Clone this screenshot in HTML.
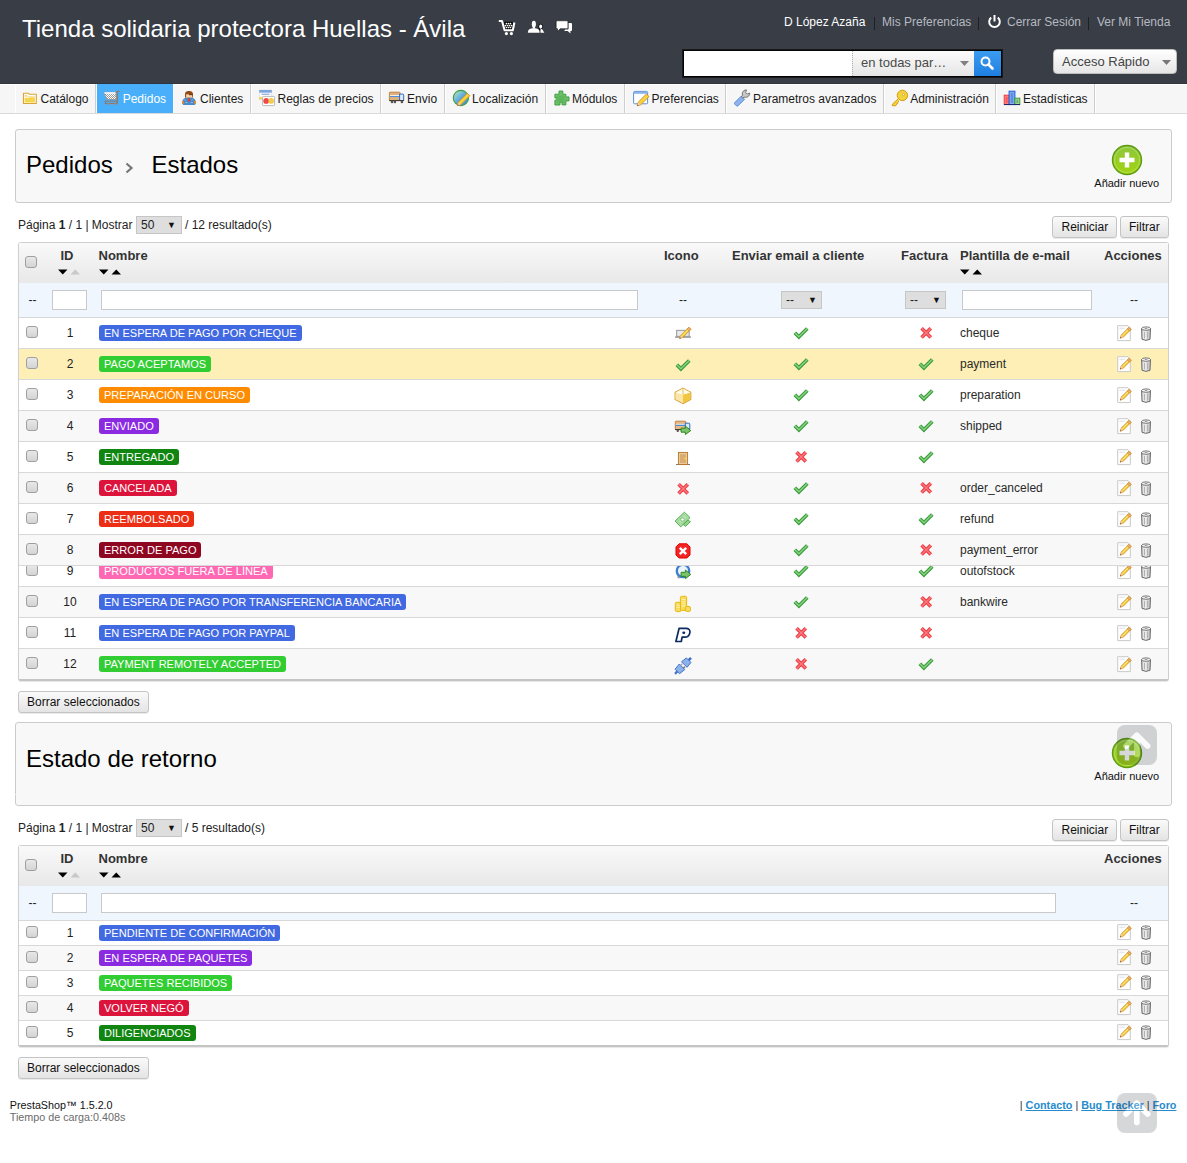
<!DOCTYPE html><html><head><meta charset="utf-8"><style>*{margin:0;padding:0;box-sizing:border-box}
html,body{width:1187px;height:1163px;overflow:hidden;background:#fff;font-family:"Liberation Sans",sans-serif;color:#222}
.a{position:absolute;white-space:nowrap}
.ico{position:absolute;overflow:visible}
#hdr{position:absolute;left:0;top:0;width:1187px;height:84px;background:#383d46}
#menu{position:absolute;left:0;top:84px;width:1187px;height:30px;background:#f6f6f6;border-top:1px solid #fff;border-bottom:1px solid #dadada}
</style></head><body><div id="hdr"></div><div class="a" style="left:22px;top:16.68px;font-size:24px;line-height:24px;color:#fff;">Tienda solidaria protectora Huellas - Ávila</div><svg class="ico" style="left:494px;top:14px" width="30" height="26" viewBox="0 0 30 26">
<rect x="10.3" y="7.8" width="8.4" height="7.4" fill="#000"/>
<path d="M4.8 7h3.2l2.6 9.3h8.2l1.6-7.8" fill="none" stroke="#fff" stroke-width="2.1" stroke-linejoin="round"/>
<g fill="#fff"><circle cx="12.4" cy="9.6" r=".85"/><circle cx="14.5" cy="9.6" r=".85"/><circle cx="16.5" cy="9.6" r=".85"/><circle cx="11.4" cy="11.6" r=".85"/><circle cx="13.5" cy="11.6" r=".85"/><circle cx="15.5" cy="11.6" r=".85"/><circle cx="17.5" cy="11.6" r=".85"/><circle cx="12.4" cy="13.5" r=".85"/><circle cx="14.5" cy="13.5" r=".85"/><circle cx="16.5" cy="13.5" r=".85"/>
<circle cx="12.4" cy="19.6" r="1.6"/><circle cx="17.4" cy="19.6" r="1.6"/></g></svg><svg class="ico" style="left:522px;top:14px" width="30" height="26" viewBox="0 0 30 26">
<path d="M16.5 14.5l1.5.2.8 4.1h-1.8z" fill="#111"/><ellipse cx="18.7" cy="12.6" rx="2.2" ry="2.8" fill="#111"/>
<g fill="#fff"><ellipse cx="11.85" cy="10.2" rx="2.05" ry="3.4"/><rect x="10.8" y="12" width="2.1" height="2.6"/><path d="M5.9 18.8c0-3.3 1.6-4.3 4.6-4.6h2.6c3 .3 4.6 1.3 4.6 4.6z"/>
<ellipse cx="18.7" cy="12.6" rx="1.5" ry="2.1"/><path d="M18.3 18.8l.3-3.6c.8-.4 1.3-.2 1.8.4l1.9 3.2z"/></g></svg><svg class="ico" style="left:522px;top:14px" width="60" height="26" viewBox="0 0 60 26">
<path d="M35.2 6.8h9.7a1 1 0 0 1 1 1v5.9a1 1 0 0 1-1 1h-6.8l-2.6 2.8v-2.8h-.3a1 1 0 0 1-1-1V7.8a1 1 0 0 1 1-1z" fill="#fff" stroke="#000" stroke-width=".5"/>
<path d="M46.6 9h2.4a1 1 0 0 1 1 1v5.9a1 1 0 0 1-1 1h-.6v2.7l-2.6-2.7h-3.8l1.4-1.4h2.2a1 1 0 0 0 1-1z" fill="#fff"/></svg><div class="a" style="left:784px;top:15.84px;font-size:12px;line-height:12px;color:#fff;">D López Azaña</div><div class="a" style="left:874px;top:17px;width:1px;height:13px;background:#1c1f24"></div><div class="a" style="left:882px;top:15.84px;font-size:12px;line-height:12px;color:#b6bac0;">Mis Preferencias</div><div class="a" style="left:978px;top:17px;width:1px;height:13px;background:#1c1f24"></div><svg class="ico" style="left:987px;top:14px" width="15" height="15" viewBox="0 0 15 15">
<path d="M4.2 3.6A5.3 5.3 0 1 0 10.8 3.6" fill="none" stroke="#fff" stroke-width="2"/><rect x="6.5" y="1" width="2" height="6.5" fill="#fff"/></svg><div class="a" style="left:1007px;top:15.84px;font-size:12px;line-height:12px;color:#b6bac0;">Cerrar Sesión</div><div class="a" style="left:1088px;top:17px;width:1px;height:13px;background:#1c1f24"></div><div class="a" style="left:1097px;top:15.84px;font-size:12px;line-height:12px;color:#b6bac0;">Ver Mi Tienda</div><div class="a" style="left:682px;top:49px;width:321px;height:29px;background:#050505;border:1px solid #1a1a1a"></div><div class="a" style="left:684px;top:51px;width:168px;height:25px;background:#fff"></div><div class="a" style="left:852px;top:51px;width:122px;height:25px;background:linear-gradient(#fbfbfb,#e6e6e6);border-left:1px dotted #aaa"></div><div class="a" style="left:861px;top:56.20px;font-size:13px;line-height:13px;color:#4a4a4a;">en todas par…</div><svg class="ico" style="left:960px;top:61px" width="9" height="5"><path d="M0 0h9L4.5 5z" fill="#808080"/></svg><div class="a" style="left:974px;top:51px;width:27px;height:25px;background:linear-gradient(#3c9cf0,#1f7fe0)"></div><svg class="ico" style="left:979px;top:55px" width="16" height="16" viewBox="0 0 16 16">
<circle cx="6.5" cy="6.5" r="4" fill="none" stroke="#fff" stroke-width="2"/><path d="M9.5 9.5l4 4" stroke="#fff" stroke-width="2.6" stroke-linecap="round"/></svg><div class="a" style="left:1053px;top:49px;width:124px;height:25px;border-radius:4px;background:linear-gradient(#ffffff,#e6e6e6);border:1px solid #bdbdbd"></div><div class="a" style="left:1062px;top:55.00px;font-size:13px;line-height:13px;color:#444;">Acceso Rápido</div><svg class="ico" style="left:1162px;top:60px" width="9" height="5"><path d="M0 0h9L4.5 5z" fill="#777"/></svg><div id="menu"></div><div class="a" style="left:97px;top:84px;width:76px;height:29px;background:#4aaffa"></div><div class="a" style="left:95px;top:84px;width:1px;height:29px;background:#cdcdcd"></div><div class="a" style="left:250px;top:84px;width:1px;height:29px;background:#cdcdcd"></div><div class="a" style="left:380px;top:84px;width:1px;height:29px;background:#cdcdcd"></div><div class="a" style="left:444px;top:84px;width:1px;height:29px;background:#cdcdcd"></div><div class="a" style="left:545px;top:84px;width:1px;height:29px;background:#cdcdcd"></div><div class="a" style="left:624px;top:84px;width:1px;height:29px;background:#cdcdcd"></div><div class="a" style="left:725px;top:84px;width:1px;height:29px;background:#cdcdcd"></div><div class="a" style="left:883px;top:84px;width:1px;height:29px;background:#cdcdcd"></div><div class="a" style="left:995px;top:84px;width:1px;height:29px;background:#cdcdcd"></div><div class="a" style="left:1094px;top:84px;width:1px;height:29px;background:#cdcdcd"></div><div class="a" style="left:15px;top:84px;width:1px;height:29px;background:#fff"></div><div class="a" style="left:96px;top:84px;width:1px;height:29px;background:#fff"></div><div class="a" style="left:173px;top:84px;width:1px;height:29px;background:#fff"></div><div class="a" style="left:251px;top:84px;width:1px;height:29px;background:#fff"></div><div class="a" style="left:381px;top:84px;width:1px;height:29px;background:#fff"></div><div class="a" style="left:445px;top:84px;width:1px;height:29px;background:#fff"></div><div class="a" style="left:546px;top:84px;width:1px;height:29px;background:#fff"></div><div class="a" style="left:625px;top:84px;width:1px;height:29px;background:#fff"></div><div class="a" style="left:726px;top:84px;width:1px;height:29px;background:#fff"></div><div class="a" style="left:884px;top:84px;width:1px;height:29px;background:#fff"></div><div class="a" style="left:996px;top:84px;width:1px;height:29px;background:#fff"></div><div class="a" style="left:1095px;top:84px;width:1px;height:29px;background:#fff"></div><svg class="ico" style="left:20px;top:86px" width="24" height="24" viewBox="0 0 24 24"><path d="M3.5 7.3h5l.8 1h7v9.2H3.5z" fill="#fff" stroke="#e0a232" stroke-width="1.1" stroke-linejoin="round"/>
<path d="M4.6 9.3h2.2l.6.6h7.6v.6H4.6z" fill="#efc75a"/><path d="M4.6 11.8h4l.6-.5h5.7v5.1H4.6z" fill="#f5d54a"/></svg><svg class="ico" style="left:101px;top:86px" width="24" height="24" viewBox="0 0 24 24"><defs><pattern id="mesh" width="2" height="2" patternUnits="userSpaceOnUse"><rect width="2" height="2" fill="#fff"/><rect width="1" height="1" fill="#9a9a9a"/><rect x="1" y="1" width="1" height="1" fill="#9a9a9a"/></pattern></defs>
<path d="M3.3 6.2L14.6 6.5 15.6 13.5 6.3 13.6 5 11.5 4.2 9.5z" fill="url(#mesh)" stroke="#8a8580" stroke-width=".6"/>
<path d="M3.3 6.3h11.3v1.4H3.6z" fill="#fff"/>
<path d="M14.8 6.6l1.6-1.2h2.2M16.6 6.5l-.4 10.8" fill="none" stroke="#8a7a70" stroke-width="1.3"/>
<rect x="4.3" y="15.1" width="12" height="2.3" fill="none" stroke="#8a7a70" stroke-width="1.1"/>
<circle cx="7.4" cy="18" r="1.2" fill="#9a8a80"/><circle cx="14.4" cy="18" r="1.2" fill="#9a8a80"/></svg><svg class="ico" style="left:179px;top:86px" width="24" height="24" viewBox="0 0 24 24"><path d="M3.1 17.6c0-4.2 2.3-6.5 6.9-6.5s6.9 2.3 6.9 6.5l-1.2 1.4H4.3z" fill="#4a8acb"/>
<path d="M5.5 13.5l1.2 1.3M13.5 13.3l-.8 1.5M6.2 16.5h2.5M11.5 16.5h2.5" stroke="#9cc4ee" stroke-width=".7"/>
<path d="M9 12.2h1.9l.3 2.5-1.2 1.2-1.2-1.2z" fill="#d8403a"/>
<rect x="3" y="14.8" width="1.9" height="3.2" rx=".9" fill="#e48a2a"/><rect x="15.1" y="14.8" width="1.9" height="3.2" rx=".9" fill="#e48a2a"/>
<path d="M6 8.8c0-3.2 1.5-3.9 4-3.9s4 .7 4 3.9v2.6H6z" fill="#8f4a18"/>
<path d="M7.1 8.3h6.1v3.3H7.1z" fill="#f7d2a6"/><path d="M10 8h4v1.2h-4z" fill="#7a3a10"/></svg><svg class="ico" style="left:256px;top:86px" width="24" height="24" viewBox="0 0 24 24"><rect x="3.2" y="4" width="12.6" height="9.6" fill="#fff" stroke="#c9d2e0" stroke-width=".5"/>
<rect x="3.2" y="4" width="12.6" height="2.7" fill="#7ea6dc"/><path d="M5.5 8.3h8" stroke="#9db6dc" stroke-width="1.4"/>
<rect x="3.2" y="10.8" width="3.2" height="2.8" fill="#f5d35a"/>
<rect x="6.6" y="10.4" width="12" height="9.2" rx=".8" fill="#fff" stroke="#a8a8a8" stroke-width=".8"/>
<circle cx="10.2" cy="14.9" r="2.9" fill="#f04848"/><circle cx="15.2" cy="14.9" r="2.8" fill="#f2cc50"/></svg><svg class="ico" style="left:386px;top:86px" width="24" height="24" viewBox="0 0 24 24"><rect x="3.4" y="6.2" width="10.6" height="8.3" rx=".6" fill="#e0b07a" stroke="#c07a3a" stroke-width=".9"/>
<rect x="4" y="9.2" width="9.6" height=".8" fill="#fff"/><rect x="4" y="10" width="9.6" height="1" fill="#4a90e0"/>
<path d="M13.6 8.1h3.1a1 1 0 0 1 1 1v5.4h-4.1z" fill="#dce9f8" stroke="#2d6cc0" stroke-width="1"/>
<rect x="3.2" y="14.1" width="14.6" height="1" fill="#3a3028"/>
<circle cx="6" cy="15.9" r="1.3" fill="#555"/><circle cx="8.9" cy="15.9" r="1.3" fill="#555"/><circle cx="15.9" cy="15.9" r="1.3" fill="#555"/></svg><svg class="ico" style="left:450px;top:86px" width="24" height="24" viewBox="0 0 24 24"><defs><linearGradient id="gl" x1="0" y1="0" x2="1" y2="1"><stop offset="0" stop-color="#c8f0c0"/><stop offset=".5" stop-color="#5aa8e0"/><stop offset="1" stop-color="#3a8ad0"/></linearGradient></defs>
<circle cx="10.9" cy="12" r="7.6" fill="url(#gl)" stroke="#3fa040" stroke-width="1.1"/>
<path d="M7.4 19.6l.9-3.4 9-9 2.5 2.5-9 9z" fill="#f5d53a" stroke="#d08a2a" stroke-width=".9"/><path d="M7.4 19.6l.9-3.4 2.5 2.5z" fill="#f4c8a0"/><path d="M7.4 19.6l.4-1.3 1 1z" fill="#5a3a10"/></svg><svg class="ico" style="left:551px;top:86px" width="24" height="24" viewBox="0 0 24 24"><path d="M8 5h3.8v3.2h3.1v2.7H18v4h-3.1v4h-3.8v-2.5H9V19H3.9v-4.8h1.9V12H3.9V8.2H8z" fill="#6cc06a" stroke="#3d9a3d" stroke-width=".9" stroke-linejoin="round"/>
<path d="M6.2 9.6h7.2v7.6H6.2z" fill="#5ab458" opacity=".7"/></svg><svg class="ico" style="left:630px;top:86px" width="24" height="24" viewBox="0 0 24 24"><rect x="3.6" y="5.4" width="14" height="12.4" rx="1" fill="#fff" stroke="#5b8fd6" stroke-width="1"/>
<rect x="4" y="5.8" width="13.2" height="2" fill="#8ab4ea"/>
<path d="M7.2 19.8l1-3.6 8.2-8.2 2.6 2.6-8.2 8.2z" fill="#f5d53a" stroke="#d08a2a" stroke-width=".9"/><path d="M7.2 19.8l1-3.6 2.6 2.6z" fill="#f4c8a0"/><path d="M7.2 19.8l.4-1.4 1 1z" fill="#5a3a10"/></svg><svg class="ico" style="left:731px;top:86px" width="24" height="24" viewBox="0 0 24 24"><path d="M3.8 16.6l6.6-6.6 3.2 3.2-6.6 6.6a1.2 1.2 0 0 1-1.6 0l-1.6-1.6a1.2 1.2 0 0 1 0-1.6z" fill="#8fb2ea" stroke="#4f86dc" stroke-width=".9"/>
<path d="M10.4 10.8l1.1-1.1c-.6-2.2-.1-4.6 2.4-5.6l1.6-.2-.9 2.5 1.6 1.6 2.5-.9-.2 1.6c-1 2.5-3.4 3-5.6 2.4l-1.1 1.1z" fill="#c8c8c8" stroke="#6a6a6a" stroke-width=".9"/></svg><svg class="ico" style="left:889px;top:86px" width="24" height="24" viewBox="0 0 24 24"><circle cx="13.4" cy="9.4" r="5.2" fill="#f2d23a" stroke="#d49a10" stroke-width="1"/>
<circle cx="14.5" cy="8.5" r="1.1" fill="#fff" stroke="#d49a10" stroke-width=".7"/>
<path d="M9.5 12.6L3.4 18.2v1.5h3.3l.9-.9v-1l1-.3.1-1 1.3-1.2" fill="#f2d23a" stroke="#d49a10" stroke-width="1" stroke-linejoin="round"/></svg><svg class="ico" style="left:1001px;top:86px" width="24" height="24" viewBox="0 0 24 24"><rect x="3.2" y="9.2" width="4.9" height="9.4" fill="#ff8a8a" stroke="#f03a3a" stroke-width="1"/><rect x="4.6" y="10.6" width="2" height="6.6" fill="#ff5555"/>
<rect x="8.1" y="5.2" width="5.8" height="13.4" fill="#8ab4f0" stroke="#1a5ad8" stroke-width="1"/><rect x="9.6" y="6.6" width="2.8" height="10.6" fill="#5a90e0"/>
<rect x="13.9" y="12.2" width="4.9" height="6.4" fill="#a8dca0" stroke="#3a9a3a" stroke-width="1"/><rect x="15.3" y="13.6" width="2" height="3.6" fill="#6ab06a"/>
<rect x="3" y="18" width="16" height="1" fill="#1a2a70"/></svg><div class="a" style="left:40.5px;top:92.84px;font-size:12px;line-height:12px;color:#1a1a1a;">Catálogo</div><div class="a" style="left:122.7px;top:92.84px;font-size:12px;line-height:12px;color:#fff;">Pedidos</div><div class="a" style="left:200.0px;top:92.84px;font-size:12px;line-height:12px;color:#1a1a1a;">Clientes</div><div class="a" style="left:277.5px;top:92.84px;font-size:12px;line-height:12px;color:#1a1a1a;">Reglas de precios</div><div class="a" style="left:407.09999999999997px;top:92.84px;font-size:12px;line-height:12px;color:#1a1a1a;">Envio</div><div class="a" style="left:472.09999999999997px;top:92.84px;font-size:12px;line-height:12px;color:#1a1a1a;">Localización</div><div class="a" style="left:572.0px;top:92.84px;font-size:12px;line-height:12px;color:#1a1a1a;">Módulos</div><div class="a" style="left:651.5px;top:92.84px;font-size:12px;line-height:12px;color:#1a1a1a;">Preferencias</div><div class="a" style="left:753.0px;top:92.84px;font-size:12px;line-height:12px;color:#1a1a1a;">Parametros avanzados</div><div class="a" style="left:910.2px;top:92.84px;font-size:12px;line-height:12px;color:#1a1a1a;">Administración</div><div class="a" style="left:1022.9000000000001px;top:92.84px;font-size:12px;line-height:12px;color:#1a1a1a;">Estadísticas</div><div class="a" style="left:0;top:83px;width:1187px;height:1px;background:#30343b"></div><div class="a" style="left:15px;top:129px;width:1157px;height:74px;background:#f8f8f8;border:1px solid #cbcbcb;border-radius:3px"></div><svg class="ico" style="left:1111px;top:144px" width="32" height="32" viewBox="0 0 32 32">
<defs><linearGradient id="pg129" x1="0" y1="0" x2="0" y2="1"><stop offset="0" stop-color="#8cc63c"/><stop offset="1" stop-color="#a2d40e"/></linearGradient></defs>
<circle cx="16" cy="16" r="14.5" fill="url(#pg129)" stroke="#5d9c14" stroke-width="1.4"/>
<circle cx="16" cy="16" r="12.6" fill="none" stroke="#c6e88a" stroke-width=".8" opacity=".7"/>
<path d="M13.8 8.5h4.4v5.3h5.3v4.4h-5.3v5.3h-4.4v-5.3H8.5v-4.4h5.3z" fill="#fff"/></svg><div class="a" style="left:1094.3px;top:177.69px;font-size:11px;line-height:11px;color:#111;">Añadir nuevo</div><div class="a" style="left:26px;top:153.38px;font-size:24px;line-height:24px;color:#000;">Pedidos</div><svg class="ico" style="left:125px;top:162px" width="9" height="12" viewBox="0 0 9 12"><path d="M1.5 1.5L6.5 6L1.5 10.5" fill="none" stroke="#777" stroke-width="2.2"/></svg><div class="a" style="left:151.5px;top:153.38px;font-size:24px;line-height:24px;color:#000;">Estados</div><div class="a" style="left:18px;top:219.14px;font-size:12px;line-height:12px;color:#222">Página <b>1</b> / 1 | Mostrar</div><div class="a" style="left:136px;top:216px;width:46px;height:18px;background:#dedede;border:1px solid #c6c6c6"></div><div class="a" style="left:141px;top:219.14px;font-size:12px;line-height:12px;color:#222;">50</div><div class="a" style="left:167px;top:220.8px;font-size:9px;line-height:9px;color:#111">▼</div><div class="a" style="left:185px;top:219.14px;font-size:12px;line-height:12px;color:#222;">/ 12 resultado(s)</div><div class="a" style="left:1052px;top:216px;width:65px;height:22px;border:1px solid #c4c4c4;border-radius:3px;background:linear-gradient(#fafafa,#e4e4e4);box-shadow:0 1px 0 rgba(0,0,0,.08)"></div><div class="a" style="left:1061.5px;top:221.14px;font-size:12px;line-height:12px;color:#111;">Reiniciar</div><div class="a" style="left:1120px;top:216px;width:49px;height:22px;border:1px solid #c4c4c4;border-radius:3px;background:linear-gradient(#fafafa,#e4e4e4);box-shadow:0 1px 0 rgba(0,0,0,.08)"></div><div class="a" style="left:1129px;top:221.14px;font-size:12px;line-height:12px;color:#111;">Filtrar</div><div class="a" style="left:18px;top:242px;width:1151px;height:439px;border:1px solid #cfcfcf;border-bottom:2px solid #c4c4c4;border-radius:3px;background:#fff;box-shadow:0 1px 1px rgba(0,0,0,.1)"></div><div class="a" style="left:19px;top:243px;width:1149px;height:40px;background:linear-gradient(#f9f9f9,#e8e8e8)"></div><div class="a" style="left:19px;top:283px;width:1149px;height:34px;background:#eff6fd"></div><div class="a" style="left:25px;top:256px;width:12px;height:12px;border:1px solid #9f9f9f;border-radius:3px;background:linear-gradient(#e8e8e8,#d4d4d4)"></div><div class="a" style="left:60.5px;top:248.60px;font-size:13px;line-height:13px;color:#333;font-weight:bold;">ID</div><svg class="ico" style="left:57.5px;top:269px" width="24" height="6" viewBox="0 0 24 6"><path d="M0 0.5h9.5L4.75 5.5z" fill="#000"/><path d="M12.5 5.5h9.5L17.25 0.5z" fill="#c8c8c8"/></svg><div class="a" style="left:98.5px;top:248.60px;font-size:13px;line-height:13px;color:#333;font-weight:bold;">Nombre</div><svg class="ico" style="left:98.8px;top:269px" width="24" height="6" viewBox="0 0 24 6"><path d="M0 0.5h9.5L4.75 5.5z" fill="#000"/><path d="M12.5 5.5h9.5L17.25 0.5z" fill="#000"/></svg><div class="a" style="left:664px;top:248.60px;font-size:13px;line-height:13px;color:#333;font-weight:bold;">Icono</div><div class="a" style="left:732px;top:248.60px;font-size:13px;line-height:13px;color:#333;font-weight:bold;">Enviar email a cliente</div><div class="a" style="left:901px;top:248.60px;font-size:13px;line-height:13px;color:#333;font-weight:bold;">Factura</div><div class="a" style="left:960px;top:248.60px;font-size:13px;line-height:13px;color:#333;font-weight:bold;">Plantilla de e-mail</div><svg class="ico" style="left:960px;top:269px" width="24" height="6" viewBox="0 0 24 6"><path d="M0 0.5h9.5L4.75 5.5z" fill="#000"/><path d="M12.5 5.5h9.5L17.25 0.5z" fill="#000"/></svg><div class="a" style="left:1104px;top:248.60px;font-size:13px;line-height:13px;color:#333;font-weight:bold;">Acciones</div><div class="a" style="left:28.5px;top:293.84px;font-size:12px;line-height:12px;color:#222;">--</div><div class="a" style="left:52px;top:290px;width:35px;height:20px;background:#fff;border:1px solid #c9c9c9"></div><div class="a" style="left:101px;top:290px;width:537px;height:20px;background:#fff;border:1px solid #c9c9c9"></div><div class="a" style="left:679px;top:293.84px;font-size:12px;line-height:12px;color:#222;">--</div><div class="a" style="left:781px;top:291px;width:41px;height:18px;background:#dedede;border:1px solid #c6c6c6"></div><div class="a" style="left:786px;top:293.84px;font-size:12px;line-height:12px;color:#222;">--</div><div class="a" style="left:808px;top:295.5px;font-size:9px;line-height:9px;color:#111">▼</div><div class="a" style="left:905px;top:291px;width:41px;height:18px;background:#dedede;border:1px solid #c6c6c6"></div><div class="a" style="left:910px;top:293.84px;font-size:12px;line-height:12px;color:#222;">--</div><div class="a" style="left:932px;top:295.5px;font-size:9px;line-height:9px;color:#111">▼</div><div class="a" style="left:962px;top:290px;width:130px;height:20px;background:#fff;border:1px solid #c9c9c9"></div><div class="a" style="left:1130px;top:293.84px;font-size:12px;line-height:12px;color:#222;">--</div><div class="a" style="left:19px;top:317px;width:1149px;height:31px;background:#fff;border-top:1px solid #d8d8d8;overflow:hidden"><div class="a" style="left:7px;top:8px;width:12px;height:12px;border:1px solid #9f9f9f;border-radius:3px;background:linear-gradient(#e8e8e8,#d4d4d4)"></div><div class="a" style="left:36px;top:8.84px;width:30px;text-align:center;font-size:12px;line-height:12px;color:#222">1</div><div class="a" style="left:80px;top:7px;height:16px;padding:0 5px;border-radius:3px;background:#4169e1;color:#fff;font-size:11.05px;line-height:16px">EN ESPERA DE PAGO POR CHEQUE</div><svg class="ico" style="left:652px;top:3px" width="24" height="24" viewBox="0 0 24 24"><rect x="5.6" y="9.4" width="12.6" height="6" fill="#e8e8e8" stroke="#a0a0a0" stroke-width="1.1"/><rect x="4.1" y="15.2" width="15.8" height="1.7" fill="#a0a0a0"/><g transform="translate(8.6 17.6) rotate(-45)"><path d="M0 0 L3 -1.4 H14.5 V1.4 H3 Z" fill="#f6d23c" stroke="#cf8a22" stroke-width=".8"/><path d="M0 0 L3 -1.4 V1.4 Z" fill="#f3c9a0"/><path d="M0 0 L1.2 -.55 V.55Z" fill="#4a2a08"/><rect x="12.3" y="-1.4" width="2.2" height="2.8" fill="#f0b080" stroke="#cf8a22" stroke-width=".7"/><path d="M4 -.35 H12.1" stroke="#fff6c0" stroke-width=".6"/></g></svg><svg class="ico" style="left:770px;top:2px" width="24" height="24" viewBox="0 0 24 24"><path d="M5.8 12.7L9.9 16.8L18.3 8.5" fill="none" stroke="#3a9a3e" stroke-width="3.7"/><path d="M5.8 12.7L9.9 16.8L18.3 8.5" fill="none" stroke="#86d47c" stroke-width="1.5"/></svg><svg class="ico" style="left:895px;top:2px" width="24" height="24" viewBox="0 0 24 24"><path d="M7.6 8.3L16.8 17.5M16.8 8.3L7.6 17.5" stroke="#ee3a42" stroke-width="3.6"/><path d="M7.6 8.3L16.8 17.5M16.8 8.3L7.6 17.5" stroke="#fb7a7e" stroke-width="1.4"/></svg><div class="a" style="left:941px;top:9.34px;font-size:12px;line-height:12px;color:#2a2a2a;">cheque</div><svg class="ico" style="left:1095px;top:4px" width="24" height="24" viewBox="0 0 24 24"><path d="M3.7 3.7h10.4l2.2 2.2v12.7H3.7z" fill="#fff" stroke="#c9c9c9" stroke-width="1"/><rect x="5.3" y="5.6" width="5.5" height="1.4" fill="#e6e8ee"/><g transform="translate(6.2 16.2) rotate(-45)"><path d="M0 0 L3 -1.45 H13.8 V1.45 H3 Z" fill="#f6d23c" stroke="#cf8a22" stroke-width=".8"/><path d="M0 0 L3 -1.45 V1.45 Z" fill="#f3c9a0"/><path d="M0 0 L1.2 -.55 V.55Z" fill="#4a2a08"/><rect x="11.600000000000001" y="-1.45" width="2.2" height="2.9" fill="#f0b080" stroke="#cf8a22" stroke-width=".7"/><path d="M4 -.35 H11.4" stroke="#fff6c0" stroke-width=".6"/></g></svg><svg class="ico" style="left:1120px;top:5px" width="24" height="24" viewBox="0 0 24 24"><defs><linearGradient id="tg" x1="0" x2="1"><stop offset="0" stop-color="#cfcfcf"/><stop offset=".35" stop-color="#f2f2f2"/><stop offset="1" stop-color="#bdbdbd"/></linearGradient></defs><path d="M2.6 5.6L3 16.3Q7 18.4 11 16.3L11.5 5.6Z" fill="url(#tg)" stroke="#6a6a6a" stroke-width="1"/><ellipse cx="7.05" cy="5.6" rx="4.45" ry="1.7" fill="#f4f4f4" stroke="#6a6a6a" stroke-width=".9"/><ellipse cx="7.05" cy="5.4" rx="1.5" ry=".7" fill="#9a9a9a"/><path d="M5.5 8.8v6.6M8.6 8.8v6.6" stroke="#a8a8a8" stroke-width=".9"/></svg></div><div class="a" style="left:19px;top:348px;width:1149px;height:31px;background:#fdefb5;border-top:1px solid #d8d8d8;overflow:hidden"><div class="a" style="left:7px;top:8px;width:12px;height:12px;border:1px solid #9f9f9f;border-radius:3px;background:linear-gradient(#e8e8e8,#d4d4d4)"></div><div class="a" style="left:36px;top:8.84px;width:30px;text-align:center;font-size:12px;line-height:12px;color:#222">2</div><div class="a" style="left:80px;top:7px;height:16px;padding:0 5px;border-radius:3px;background:#32cd32;color:#fff;font-size:11.05px;line-height:16px">PAGO ACEPTAMOS</div><svg class="ico" style="left:652px;top:3px" width="24" height="24" viewBox="0 0 24 24"><path d="M5.8 12.7L9.9 16.8L18.3 8.5" fill="none" stroke="#3a9a3e" stroke-width="3.7"/><path d="M5.8 12.7L9.9 16.8L18.3 8.5" fill="none" stroke="#86d47c" stroke-width="1.5"/></svg><svg class="ico" style="left:770px;top:2px" width="24" height="24" viewBox="0 0 24 24"><path d="M5.8 12.7L9.9 16.8L18.3 8.5" fill="none" stroke="#3a9a3e" stroke-width="3.7"/><path d="M5.8 12.7L9.9 16.8L18.3 8.5" fill="none" stroke="#86d47c" stroke-width="1.5"/></svg><svg class="ico" style="left:895px;top:2px" width="24" height="24" viewBox="0 0 24 24"><path d="M5.8 12.7L9.9 16.8L18.3 8.5" fill="none" stroke="#3a9a3e" stroke-width="3.7"/><path d="M5.8 12.7L9.9 16.8L18.3 8.5" fill="none" stroke="#86d47c" stroke-width="1.5"/></svg><div class="a" style="left:941px;top:9.34px;font-size:12px;line-height:12px;color:#2a2a2a;">payment</div><svg class="ico" style="left:1095px;top:4px" width="24" height="24" viewBox="0 0 24 24"><path d="M3.7 3.7h10.4l2.2 2.2v12.7H3.7z" fill="#fff" stroke="#c9c9c9" stroke-width="1"/><rect x="5.3" y="5.6" width="5.5" height="1.4" fill="#e6e8ee"/><g transform="translate(6.2 16.2) rotate(-45)"><path d="M0 0 L3 -1.45 H13.8 V1.45 H3 Z" fill="#f6d23c" stroke="#cf8a22" stroke-width=".8"/><path d="M0 0 L3 -1.45 V1.45 Z" fill="#f3c9a0"/><path d="M0 0 L1.2 -.55 V.55Z" fill="#4a2a08"/><rect x="11.600000000000001" y="-1.45" width="2.2" height="2.9" fill="#f0b080" stroke="#cf8a22" stroke-width=".7"/><path d="M4 -.35 H11.4" stroke="#fff6c0" stroke-width=".6"/></g></svg><svg class="ico" style="left:1120px;top:5px" width="24" height="24" viewBox="0 0 24 24"><defs><linearGradient id="tg" x1="0" x2="1"><stop offset="0" stop-color="#cfcfcf"/><stop offset=".35" stop-color="#f2f2f2"/><stop offset="1" stop-color="#bdbdbd"/></linearGradient></defs><path d="M2.6 5.6L3 16.3Q7 18.4 11 16.3L11.5 5.6Z" fill="url(#tg)" stroke="#6a6a6a" stroke-width="1"/><ellipse cx="7.05" cy="5.6" rx="4.45" ry="1.7" fill="#f4f4f4" stroke="#6a6a6a" stroke-width=".9"/><ellipse cx="7.05" cy="5.4" rx="1.5" ry=".7" fill="#9a9a9a"/><path d="M5.5 8.8v6.6M8.6 8.8v6.6" stroke="#a8a8a8" stroke-width=".9"/></svg></div><div class="a" style="left:19px;top:379px;width:1149px;height:31px;background:#fff;border-top:1px solid #d8d8d8;overflow:hidden"><div class="a" style="left:7px;top:8px;width:12px;height:12px;border:1px solid #9f9f9f;border-radius:3px;background:linear-gradient(#e8e8e8,#d4d4d4)"></div><div class="a" style="left:36px;top:8.84px;width:30px;text-align:center;font-size:12px;line-height:12px;color:#222">3</div><div class="a" style="left:80px;top:7px;height:16px;padding:0 5px;border-radius:3px;background:#ff8c00;color:#fff;font-size:11.05px;line-height:16px">PREPARACIÓN EN CURSO</div><svg class="ico" style="left:652px;top:3px" width="24" height="24" viewBox="0 0 24 24"><path d="M12 5.2L19.8 9.3V16.5L12 20.6 4.1 16.5V9.3z" fill="#fff4d0" stroke="#d4a232" stroke-width="1.1"/><path d="M12 11.4L19.3 9.6V16.3L12 20.2z" fill="#f2c640"/><path d="M4.6 9.6L12 11.4V20.2L4.6 16.3z" fill="#fbe6a8"/><path d="M4.6 9.4L12 5.6 19.3 9.4 12 11.4z" fill="#fffbe8"/><path d="M12 6v5.4" stroke="#d4a232" stroke-width=".7"/></svg><svg class="ico" style="left:770px;top:2px" width="24" height="24" viewBox="0 0 24 24"><path d="M5.8 12.7L9.9 16.8L18.3 8.5" fill="none" stroke="#3a9a3e" stroke-width="3.7"/><path d="M5.8 12.7L9.9 16.8L18.3 8.5" fill="none" stroke="#86d47c" stroke-width="1.5"/></svg><svg class="ico" style="left:895px;top:2px" width="24" height="24" viewBox="0 0 24 24"><path d="M5.8 12.7L9.9 16.8L18.3 8.5" fill="none" stroke="#3a9a3e" stroke-width="3.7"/><path d="M5.8 12.7L9.9 16.8L18.3 8.5" fill="none" stroke="#86d47c" stroke-width="1.5"/></svg><div class="a" style="left:941px;top:9.34px;font-size:12px;line-height:12px;color:#2a2a2a;">preparation</div><svg class="ico" style="left:1095px;top:4px" width="24" height="24" viewBox="0 0 24 24"><path d="M3.7 3.7h10.4l2.2 2.2v12.7H3.7z" fill="#fff" stroke="#c9c9c9" stroke-width="1"/><rect x="5.3" y="5.6" width="5.5" height="1.4" fill="#e6e8ee"/><g transform="translate(6.2 16.2) rotate(-45)"><path d="M0 0 L3 -1.45 H13.8 V1.45 H3 Z" fill="#f6d23c" stroke="#cf8a22" stroke-width=".8"/><path d="M0 0 L3 -1.45 V1.45 Z" fill="#f3c9a0"/><path d="M0 0 L1.2 -.55 V.55Z" fill="#4a2a08"/><rect x="11.600000000000001" y="-1.45" width="2.2" height="2.9" fill="#f0b080" stroke="#cf8a22" stroke-width=".7"/><path d="M4 -.35 H11.4" stroke="#fff6c0" stroke-width=".6"/></g></svg><svg class="ico" style="left:1120px;top:5px" width="24" height="24" viewBox="0 0 24 24"><defs><linearGradient id="tg" x1="0" x2="1"><stop offset="0" stop-color="#cfcfcf"/><stop offset=".35" stop-color="#f2f2f2"/><stop offset="1" stop-color="#bdbdbd"/></linearGradient></defs><path d="M2.6 5.6L3 16.3Q7 18.4 11 16.3L11.5 5.6Z" fill="url(#tg)" stroke="#6a6a6a" stroke-width="1"/><ellipse cx="7.05" cy="5.6" rx="4.45" ry="1.7" fill="#f4f4f4" stroke="#6a6a6a" stroke-width=".9"/><ellipse cx="7.05" cy="5.4" rx="1.5" ry=".7" fill="#9a9a9a"/><path d="M5.5 8.8v6.6M8.6 8.8v6.6" stroke="#a8a8a8" stroke-width=".9"/></svg></div><div class="a" style="left:19px;top:410px;width:1149px;height:31px;background:#f8f8f8;border-top:1px solid #d8d8d8;overflow:hidden"><div class="a" style="left:7px;top:8px;width:12px;height:12px;border:1px solid #9f9f9f;border-radius:3px;background:linear-gradient(#e8e8e8,#d4d4d4)"></div><div class="a" style="left:36px;top:8.84px;width:30px;text-align:center;font-size:12px;line-height:12px;color:#222">4</div><div class="a" style="left:80px;top:7px;height:16px;padding:0 5px;border-radius:3px;background:#8a2be2;color:#fff;font-size:11.05px;line-height:16px">ENVIADO</div><svg class="ico" style="left:652px;top:3px" width="24" height="24" viewBox="0 0 24 24"><rect x="4.3" y="7.2" width="10.4" height="8.3" rx=".6" fill="#e4b888" stroke="#c07a3a" stroke-width=".9"/><rect x="4.8" y="9.9" width="9.4" height=".8" fill="#fff"/><rect x="4.8" y="10.8" width="9.4" height="1.1" fill="#3a88e0"/><path d="M14.3 9.2h3.5a1 1 0 0 1 1 1v4.8h-4.5z" fill="#dce9fa" stroke="#2d6cc0" stroke-width="1"/><rect x="4.1" y="15.1" width="8" height="1" fill="#3a3028"/><circle cx="6.8" cy="16.8" r="1.2" fill="#555"/><path d="M10.1 14.2h4.3v-2l5.4 4.3-5.4 4v-2.3h-4.3z" fill="#7cc26c" stroke="#2e8a1e" stroke-width="1"/></svg><svg class="ico" style="left:770px;top:2px" width="24" height="24" viewBox="0 0 24 24"><path d="M5.8 12.7L9.9 16.8L18.3 8.5" fill="none" stroke="#3a9a3e" stroke-width="3.7"/><path d="M5.8 12.7L9.9 16.8L18.3 8.5" fill="none" stroke="#86d47c" stroke-width="1.5"/></svg><svg class="ico" style="left:895px;top:2px" width="24" height="24" viewBox="0 0 24 24"><path d="M5.8 12.7L9.9 16.8L18.3 8.5" fill="none" stroke="#3a9a3e" stroke-width="3.7"/><path d="M5.8 12.7L9.9 16.8L18.3 8.5" fill="none" stroke="#86d47c" stroke-width="1.5"/></svg><div class="a" style="left:941px;top:9.34px;font-size:12px;line-height:12px;color:#2a2a2a;">shipped</div><svg class="ico" style="left:1095px;top:4px" width="24" height="24" viewBox="0 0 24 24"><path d="M3.7 3.7h10.4l2.2 2.2v12.7H3.7z" fill="#fff" stroke="#c9c9c9" stroke-width="1"/><rect x="5.3" y="5.6" width="5.5" height="1.4" fill="#e6e8ee"/><g transform="translate(6.2 16.2) rotate(-45)"><path d="M0 0 L3 -1.45 H13.8 V1.45 H3 Z" fill="#f6d23c" stroke="#cf8a22" stroke-width=".8"/><path d="M0 0 L3 -1.45 V1.45 Z" fill="#f3c9a0"/><path d="M0 0 L1.2 -.55 V.55Z" fill="#4a2a08"/><rect x="11.600000000000001" y="-1.45" width="2.2" height="2.9" fill="#f0b080" stroke="#cf8a22" stroke-width=".7"/><path d="M4 -.35 H11.4" stroke="#fff6c0" stroke-width=".6"/></g></svg><svg class="ico" style="left:1120px;top:5px" width="24" height="24" viewBox="0 0 24 24"><defs><linearGradient id="tg" x1="0" x2="1"><stop offset="0" stop-color="#cfcfcf"/><stop offset=".35" stop-color="#f2f2f2"/><stop offset="1" stop-color="#bdbdbd"/></linearGradient></defs><path d="M2.6 5.6L3 16.3Q7 18.4 11 16.3L11.5 5.6Z" fill="url(#tg)" stroke="#6a6a6a" stroke-width="1"/><ellipse cx="7.05" cy="5.6" rx="4.45" ry="1.7" fill="#f4f4f4" stroke="#6a6a6a" stroke-width=".9"/><ellipse cx="7.05" cy="5.4" rx="1.5" ry=".7" fill="#9a9a9a"/><path d="M5.5 8.8v6.6M8.6 8.8v6.6" stroke="#a8a8a8" stroke-width=".9"/></svg></div><div class="a" style="left:19px;top:441px;width:1149px;height:31px;background:#fff;border-top:1px solid #d8d8d8;overflow:hidden"><div class="a" style="left:7px;top:8px;width:12px;height:12px;border:1px solid #9f9f9f;border-radius:3px;background:linear-gradient(#e8e8e8,#d4d4d4)"></div><div class="a" style="left:36px;top:8.84px;width:30px;text-align:center;font-size:12px;line-height:12px;color:#222">5</div><div class="a" style="left:80px;top:7px;height:16px;padding:0 5px;border-radius:3px;background:#108510;color:#fff;font-size:11.05px;line-height:16px">ENTREGADO</div><svg class="ico" style="left:652px;top:3px" width="24" height="24" viewBox="0 0 24 24"><rect x="5" y="19" width="14" height=".9" fill="#6a6a6a"/><rect x="7.4" y="7.4" width="9.2" height="12.2" fill="#d9ac72" stroke="#b8742e" stroke-width=".9"/><rect x="8.6" y="8.6" width="6.8" height="9.8" fill="none" stroke="#ecd2a4" stroke-width=".9"/><circle cx="14.3" cy="13.6" r="1" fill="#ffd84a"/></svg><svg class="ico" style="left:770px;top:2px" width="24" height="24" viewBox="0 0 24 24"><path d="M7.6 8.3L16.8 17.5M16.8 8.3L7.6 17.5" stroke="#ee3a42" stroke-width="3.6"/><path d="M7.6 8.3L16.8 17.5M16.8 8.3L7.6 17.5" stroke="#fb7a7e" stroke-width="1.4"/></svg><svg class="ico" style="left:895px;top:2px" width="24" height="24" viewBox="0 0 24 24"><path d="M5.8 12.7L9.9 16.8L18.3 8.5" fill="none" stroke="#3a9a3e" stroke-width="3.7"/><path d="M5.8 12.7L9.9 16.8L18.3 8.5" fill="none" stroke="#86d47c" stroke-width="1.5"/></svg><svg class="ico" style="left:1095px;top:4px" width="24" height="24" viewBox="0 0 24 24"><path d="M3.7 3.7h10.4l2.2 2.2v12.7H3.7z" fill="#fff" stroke="#c9c9c9" stroke-width="1"/><rect x="5.3" y="5.6" width="5.5" height="1.4" fill="#e6e8ee"/><g transform="translate(6.2 16.2) rotate(-45)"><path d="M0 0 L3 -1.45 H13.8 V1.45 H3 Z" fill="#f6d23c" stroke="#cf8a22" stroke-width=".8"/><path d="M0 0 L3 -1.45 V1.45 Z" fill="#f3c9a0"/><path d="M0 0 L1.2 -.55 V.55Z" fill="#4a2a08"/><rect x="11.600000000000001" y="-1.45" width="2.2" height="2.9" fill="#f0b080" stroke="#cf8a22" stroke-width=".7"/><path d="M4 -.35 H11.4" stroke="#fff6c0" stroke-width=".6"/></g></svg><svg class="ico" style="left:1120px;top:5px" width="24" height="24" viewBox="0 0 24 24"><defs><linearGradient id="tg" x1="0" x2="1"><stop offset="0" stop-color="#cfcfcf"/><stop offset=".35" stop-color="#f2f2f2"/><stop offset="1" stop-color="#bdbdbd"/></linearGradient></defs><path d="M2.6 5.6L3 16.3Q7 18.4 11 16.3L11.5 5.6Z" fill="url(#tg)" stroke="#6a6a6a" stroke-width="1"/><ellipse cx="7.05" cy="5.6" rx="4.45" ry="1.7" fill="#f4f4f4" stroke="#6a6a6a" stroke-width=".9"/><ellipse cx="7.05" cy="5.4" rx="1.5" ry=".7" fill="#9a9a9a"/><path d="M5.5 8.8v6.6M8.6 8.8v6.6" stroke="#a8a8a8" stroke-width=".9"/></svg></div><div class="a" style="left:19px;top:472px;width:1149px;height:31px;background:#f8f8f8;border-top:1px solid #d8d8d8;overflow:hidden"><div class="a" style="left:7px;top:8px;width:12px;height:12px;border:1px solid #9f9f9f;border-radius:3px;background:linear-gradient(#e8e8e8,#d4d4d4)"></div><div class="a" style="left:36px;top:8.84px;width:30px;text-align:center;font-size:12px;line-height:12px;color:#222">6</div><div class="a" style="left:80px;top:7px;height:16px;padding:0 5px;border-radius:3px;background:#dc143c;color:#fff;font-size:11.05px;line-height:16px">CANCELADA</div><svg class="ico" style="left:652px;top:3px" width="24" height="24" viewBox="0 0 24 24"><path d="M7.6 8.3L16.8 17.5M16.8 8.3L7.6 17.5" stroke="#ee3a42" stroke-width="3.6"/><path d="M7.6 8.3L16.8 17.5M16.8 8.3L7.6 17.5" stroke="#fb7a7e" stroke-width="1.4"/></svg><svg class="ico" style="left:770px;top:2px" width="24" height="24" viewBox="0 0 24 24"><path d="M5.8 12.7L9.9 16.8L18.3 8.5" fill="none" stroke="#3a9a3e" stroke-width="3.7"/><path d="M5.8 12.7L9.9 16.8L18.3 8.5" fill="none" stroke="#86d47c" stroke-width="1.5"/></svg><svg class="ico" style="left:895px;top:2px" width="24" height="24" viewBox="0 0 24 24"><path d="M7.6 8.3L16.8 17.5M16.8 8.3L7.6 17.5" stroke="#ee3a42" stroke-width="3.6"/><path d="M7.6 8.3L16.8 17.5M16.8 8.3L7.6 17.5" stroke="#fb7a7e" stroke-width="1.4"/></svg><div class="a" style="left:941px;top:9.34px;font-size:12px;line-height:12px;color:#2a2a2a;">order_canceled</div><svg class="ico" style="left:1095px;top:4px" width="24" height="24" viewBox="0 0 24 24"><path d="M3.7 3.7h10.4l2.2 2.2v12.7H3.7z" fill="#fff" stroke="#c9c9c9" stroke-width="1"/><rect x="5.3" y="5.6" width="5.5" height="1.4" fill="#e6e8ee"/><g transform="translate(6.2 16.2) rotate(-45)"><path d="M0 0 L3 -1.45 H13.8 V1.45 H3 Z" fill="#f6d23c" stroke="#cf8a22" stroke-width=".8"/><path d="M0 0 L3 -1.45 V1.45 Z" fill="#f3c9a0"/><path d="M0 0 L1.2 -.55 V.55Z" fill="#4a2a08"/><rect x="11.600000000000001" y="-1.45" width="2.2" height="2.9" fill="#f0b080" stroke="#cf8a22" stroke-width=".7"/><path d="M4 -.35 H11.4" stroke="#fff6c0" stroke-width=".6"/></g></svg><svg class="ico" style="left:1120px;top:5px" width="24" height="24" viewBox="0 0 24 24"><defs><linearGradient id="tg" x1="0" x2="1"><stop offset="0" stop-color="#cfcfcf"/><stop offset=".35" stop-color="#f2f2f2"/><stop offset="1" stop-color="#bdbdbd"/></linearGradient></defs><path d="M2.6 5.6L3 16.3Q7 18.4 11 16.3L11.5 5.6Z" fill="url(#tg)" stroke="#6a6a6a" stroke-width="1"/><ellipse cx="7.05" cy="5.6" rx="4.45" ry="1.7" fill="#f4f4f4" stroke="#6a6a6a" stroke-width=".9"/><ellipse cx="7.05" cy="5.4" rx="1.5" ry=".7" fill="#9a9a9a"/><path d="M5.5 8.8v6.6M8.6 8.8v6.6" stroke="#a8a8a8" stroke-width=".9"/></svg></div><div class="a" style="left:19px;top:503px;width:1149px;height:31px;background:#fff;border-top:1px solid #d8d8d8;overflow:hidden"><div class="a" style="left:7px;top:8px;width:12px;height:12px;border:1px solid #9f9f9f;border-radius:3px;background:linear-gradient(#e8e8e8,#d4d4d4)"></div><div class="a" style="left:36px;top:8.84px;width:30px;text-align:center;font-size:12px;line-height:12px;color:#222">7</div><div class="a" style="left:80px;top:7px;height:16px;padding:0 5px;border-radius:3px;background:#ec2e15;color:#fff;font-size:11.05px;line-height:16px">REEMBOLSADO</div><svg class="ico" style="left:652px;top:3px" width="24" height="24" viewBox="0 0 24 24"><path d="M12.3 17.6L16.8 13.2 19.4 14.6 14.6 19.4z" fill="#98d490" stroke="#4aa84a" stroke-width=".9"/><path d="M13.4 5.2L19 10.6 9.7 19.8 4.1 14.1z" fill="#b4e2ac" stroke="#4aa84a" stroke-width="1"/><path d="M13.3 7.6L16.6 10.7 9.7 17.5 6.5 14.3z" fill="none" stroke="#8acc82" stroke-width=".7"/><circle cx="11.5" cy="12.5" r="1.7" fill="#fff" stroke="#5ab05a" stroke-width=".7"/></svg><svg class="ico" style="left:770px;top:2px" width="24" height="24" viewBox="0 0 24 24"><path d="M5.8 12.7L9.9 16.8L18.3 8.5" fill="none" stroke="#3a9a3e" stroke-width="3.7"/><path d="M5.8 12.7L9.9 16.8L18.3 8.5" fill="none" stroke="#86d47c" stroke-width="1.5"/></svg><svg class="ico" style="left:895px;top:2px" width="24" height="24" viewBox="0 0 24 24"><path d="M5.8 12.7L9.9 16.8L18.3 8.5" fill="none" stroke="#3a9a3e" stroke-width="3.7"/><path d="M5.8 12.7L9.9 16.8L18.3 8.5" fill="none" stroke="#86d47c" stroke-width="1.5"/></svg><div class="a" style="left:941px;top:9.34px;font-size:12px;line-height:12px;color:#2a2a2a;">refund</div><svg class="ico" style="left:1095px;top:4px" width="24" height="24" viewBox="0 0 24 24"><path d="M3.7 3.7h10.4l2.2 2.2v12.7H3.7z" fill="#fff" stroke="#c9c9c9" stroke-width="1"/><rect x="5.3" y="5.6" width="5.5" height="1.4" fill="#e6e8ee"/><g transform="translate(6.2 16.2) rotate(-45)"><path d="M0 0 L3 -1.45 H13.8 V1.45 H3 Z" fill="#f6d23c" stroke="#cf8a22" stroke-width=".8"/><path d="M0 0 L3 -1.45 V1.45 Z" fill="#f3c9a0"/><path d="M0 0 L1.2 -.55 V.55Z" fill="#4a2a08"/><rect x="11.600000000000001" y="-1.45" width="2.2" height="2.9" fill="#f0b080" stroke="#cf8a22" stroke-width=".7"/><path d="M4 -.35 H11.4" stroke="#fff6c0" stroke-width=".6"/></g></svg><svg class="ico" style="left:1120px;top:5px" width="24" height="24" viewBox="0 0 24 24"><defs><linearGradient id="tg" x1="0" x2="1"><stop offset="0" stop-color="#cfcfcf"/><stop offset=".35" stop-color="#f2f2f2"/><stop offset="1" stop-color="#bdbdbd"/></linearGradient></defs><path d="M2.6 5.6L3 16.3Q7 18.4 11 16.3L11.5 5.6Z" fill="url(#tg)" stroke="#6a6a6a" stroke-width="1"/><ellipse cx="7.05" cy="5.6" rx="4.45" ry="1.7" fill="#f4f4f4" stroke="#6a6a6a" stroke-width=".9"/><ellipse cx="7.05" cy="5.4" rx="1.5" ry=".7" fill="#9a9a9a"/><path d="M5.5 8.8v6.6M8.6 8.8v6.6" stroke="#a8a8a8" stroke-width=".9"/></svg></div><div class="a" style="left:19px;top:534px;width:1149px;height:31px;background:#f8f8f8;border-top:1px solid #d8d8d8;overflow:hidden"><div class="a" style="left:7px;top:8px;width:12px;height:12px;border:1px solid #9f9f9f;border-radius:3px;background:linear-gradient(#e8e8e8,#d4d4d4)"></div><div class="a" style="left:36px;top:8.84px;width:30px;text-align:center;font-size:12px;line-height:12px;color:#222">8</div><div class="a" style="left:80px;top:7px;height:16px;padding:0 5px;border-radius:3px;background:#8f0621;color:#fff;font-size:11.05px;line-height:16px">ERROR DE PAGO</div><svg class="ico" style="left:652px;top:3px" width="24" height="24" viewBox="0 0 24 24"><path d="M8.1 5.8h7.8L19 8.9v8L15.9 20H8.1L5 16.9V8.9z" fill="#f42424" stroke="#e00000" stroke-width="1"/><path d="M8.8 9.8L15.2 16.2M15.2 9.8L8.8 16.2" stroke="#fff" stroke-width="2.4"/></svg><svg class="ico" style="left:770px;top:2px" width="24" height="24" viewBox="0 0 24 24"><path d="M5.8 12.7L9.9 16.8L18.3 8.5" fill="none" stroke="#3a9a3e" stroke-width="3.7"/><path d="M5.8 12.7L9.9 16.8L18.3 8.5" fill="none" stroke="#86d47c" stroke-width="1.5"/></svg><svg class="ico" style="left:895px;top:2px" width="24" height="24" viewBox="0 0 24 24"><path d="M7.6 8.3L16.8 17.5M16.8 8.3L7.6 17.5" stroke="#ee3a42" stroke-width="3.6"/><path d="M7.6 8.3L16.8 17.5M16.8 8.3L7.6 17.5" stroke="#fb7a7e" stroke-width="1.4"/></svg><div class="a" style="left:941px;top:9.34px;font-size:12px;line-height:12px;color:#2a2a2a;">payment_error</div><svg class="ico" style="left:1095px;top:4px" width="24" height="24" viewBox="0 0 24 24"><path d="M3.7 3.7h10.4l2.2 2.2v12.7H3.7z" fill="#fff" stroke="#c9c9c9" stroke-width="1"/><rect x="5.3" y="5.6" width="5.5" height="1.4" fill="#e6e8ee"/><g transform="translate(6.2 16.2) rotate(-45)"><path d="M0 0 L3 -1.45 H13.8 V1.45 H3 Z" fill="#f6d23c" stroke="#cf8a22" stroke-width=".8"/><path d="M0 0 L3 -1.45 V1.45 Z" fill="#f3c9a0"/><path d="M0 0 L1.2 -.55 V.55Z" fill="#4a2a08"/><rect x="11.600000000000001" y="-1.45" width="2.2" height="2.9" fill="#f0b080" stroke="#cf8a22" stroke-width=".7"/><path d="M4 -.35 H11.4" stroke="#fff6c0" stroke-width=".6"/></g></svg><svg class="ico" style="left:1120px;top:5px" width="24" height="24" viewBox="0 0 24 24"><defs><linearGradient id="tg" x1="0" x2="1"><stop offset="0" stop-color="#cfcfcf"/><stop offset=".35" stop-color="#f2f2f2"/><stop offset="1" stop-color="#bdbdbd"/></linearGradient></defs><path d="M2.6 5.6L3 16.3Q7 18.4 11 16.3L11.5 5.6Z" fill="url(#tg)" stroke="#6a6a6a" stroke-width="1"/><ellipse cx="7.05" cy="5.6" rx="4.45" ry="1.7" fill="#f4f4f4" stroke="#6a6a6a" stroke-width=".9"/><ellipse cx="7.05" cy="5.4" rx="1.5" ry=".7" fill="#9a9a9a"/><path d="M5.5 8.8v6.6M8.6 8.8v6.6" stroke="#a8a8a8" stroke-width=".9"/></svg></div><div class="a" style="left:19px;top:565px;width:1149px;height:21px;background:#fff;border-top:1px solid #d8d8d8;overflow:hidden"><div class="a" style="left:7px;top:-2px;width:12px;height:12px;border:1px solid #9f9f9f;border-radius:3px;background:linear-gradient(#e8e8e8,#d4d4d4)"></div><div class="a" style="left:36px;top:-1.16px;width:30px;text-align:center;font-size:12px;line-height:12px;color:#222">9</div><div class="a" style="left:80px;top:-3px;height:16px;padding:0 5px;border-radius:3px;background:#ff69b4;color:#fff;font-size:11.05px;line-height:16px">PRODUCTOS FUERA DE LÍNEA</div><svg class="ico" style="left:652px;top:-8px" width="24" height="24" viewBox="0 0 24 24"><circle cx="12" cy="12.9" r="6.2" fill="#eaf4fc" stroke="#3f7fd2" stroke-width="2.4"/><path d="M10.1 14.3h4.3v-2.3l5.4 4.4-5.4 4.3v-2.3h-4.3z" fill="#7cc26c" stroke="#2e8a1e" stroke-width="1"/><path d="M6.4 18.6l2 1.6" stroke="#8a8a8a" stroke-width="1.2"/></svg><svg class="ico" style="left:770px;top:-8px" width="24" height="24" viewBox="0 0 24 24"><path d="M5.8 12.7L9.9 16.8L18.3 8.5" fill="none" stroke="#3a9a3e" stroke-width="3.7"/><path d="M5.8 12.7L9.9 16.8L18.3 8.5" fill="none" stroke="#86d47c" stroke-width="1.5"/></svg><svg class="ico" style="left:895px;top:-8px" width="24" height="24" viewBox="0 0 24 24"><path d="M5.8 12.7L9.9 16.8L18.3 8.5" fill="none" stroke="#3a9a3e" stroke-width="3.7"/><path d="M5.8 12.7L9.9 16.8L18.3 8.5" fill="none" stroke="#86d47c" stroke-width="1.5"/></svg><div class="a" style="left:941px;top:-0.66px;font-size:12px;line-height:12px;color:#2a2a2a;">outofstock</div><svg class="ico" style="left:1095px;top:-6px" width="24" height="24" viewBox="0 0 24 24"><path d="M3.7 3.7h10.4l2.2 2.2v12.7H3.7z" fill="#fff" stroke="#c9c9c9" stroke-width="1"/><rect x="5.3" y="5.6" width="5.5" height="1.4" fill="#e6e8ee"/><g transform="translate(6.2 16.2) rotate(-45)"><path d="M0 0 L3 -1.45 H13.8 V1.45 H3 Z" fill="#f6d23c" stroke="#cf8a22" stroke-width=".8"/><path d="M0 0 L3 -1.45 V1.45 Z" fill="#f3c9a0"/><path d="M0 0 L1.2 -.55 V.55Z" fill="#4a2a08"/><rect x="11.600000000000001" y="-1.45" width="2.2" height="2.9" fill="#f0b080" stroke="#cf8a22" stroke-width=".7"/><path d="M4 -.35 H11.4" stroke="#fff6c0" stroke-width=".6"/></g></svg><svg class="ico" style="left:1120px;top:-5px" width="24" height="24" viewBox="0 0 24 24"><defs><linearGradient id="tg" x1="0" x2="1"><stop offset="0" stop-color="#cfcfcf"/><stop offset=".35" stop-color="#f2f2f2"/><stop offset="1" stop-color="#bdbdbd"/></linearGradient></defs><path d="M2.6 5.6L3 16.3Q7 18.4 11 16.3L11.5 5.6Z" fill="url(#tg)" stroke="#6a6a6a" stroke-width="1"/><ellipse cx="7.05" cy="5.6" rx="4.45" ry="1.7" fill="#f4f4f4" stroke="#6a6a6a" stroke-width=".9"/><ellipse cx="7.05" cy="5.4" rx="1.5" ry=".7" fill="#9a9a9a"/><path d="M5.5 8.8v6.6M8.6 8.8v6.6" stroke="#a8a8a8" stroke-width=".9"/></svg></div><div class="a" style="left:19px;top:586px;width:1149px;height:31px;background:#f8f8f8;border-top:1px solid #d8d8d8;overflow:hidden"><div class="a" style="left:7px;top:8px;width:12px;height:12px;border:1px solid #9f9f9f;border-radius:3px;background:linear-gradient(#e8e8e8,#d4d4d4)"></div><div class="a" style="left:36px;top:8.84px;width:30px;text-align:center;font-size:12px;line-height:12px;color:#222">10</div><div class="a" style="left:80px;top:7px;height:16px;padding:0 5px;border-radius:3px;background:#4169e1;color:#fff;font-size:11.05px;line-height:16px">EN ESPERA DE PAGO POR TRANSFERENCIA BANCARIA</div><svg class="ico" style="left:652px;top:4px" width="24" height="24" viewBox="0 0 24 24"><rect x="4.3" y="11.3" width="5.8" height="9.3" rx="1.3" fill="#f8dc60" stroke="#e8b810" stroke-width="1"/><rect x="9.4" y="5.3" width="6.2" height="14.1" rx="1.3" fill="#f8dc60" stroke="#e8b810" stroke-width="1"/><rect x="14.3" y="15.4" width="5.2" height="5" rx="1.5" fill="#f8dc60" stroke="#e8b810" stroke-width="1"/><path d="M10.6 8.5h3.8M10.6 10.7h3.8M10.6 12.9h3.8M10.6 15.1h3.8M5.5 14.3h3.4M5.5 16.5h3.4" stroke="#fff2b0" stroke-width=".8"/></svg><svg class="ico" style="left:770px;top:2px" width="24" height="24" viewBox="0 0 24 24"><path d="M5.8 12.7L9.9 16.8L18.3 8.5" fill="none" stroke="#3a9a3e" stroke-width="3.7"/><path d="M5.8 12.7L9.9 16.8L18.3 8.5" fill="none" stroke="#86d47c" stroke-width="1.5"/></svg><svg class="ico" style="left:895px;top:2px" width="24" height="24" viewBox="0 0 24 24"><path d="M7.6 8.3L16.8 17.5M16.8 8.3L7.6 17.5" stroke="#ee3a42" stroke-width="3.6"/><path d="M7.6 8.3L16.8 17.5M16.8 8.3L7.6 17.5" stroke="#fb7a7e" stroke-width="1.4"/></svg><div class="a" style="left:941px;top:9.34px;font-size:12px;line-height:12px;color:#2a2a2a;">bankwire</div><svg class="ico" style="left:1095px;top:4px" width="24" height="24" viewBox="0 0 24 24"><path d="M3.7 3.7h10.4l2.2 2.2v12.7H3.7z" fill="#fff" stroke="#c9c9c9" stroke-width="1"/><rect x="5.3" y="5.6" width="5.5" height="1.4" fill="#e6e8ee"/><g transform="translate(6.2 16.2) rotate(-45)"><path d="M0 0 L3 -1.45 H13.8 V1.45 H3 Z" fill="#f6d23c" stroke="#cf8a22" stroke-width=".8"/><path d="M0 0 L3 -1.45 V1.45 Z" fill="#f3c9a0"/><path d="M0 0 L1.2 -.55 V.55Z" fill="#4a2a08"/><rect x="11.600000000000001" y="-1.45" width="2.2" height="2.9" fill="#f0b080" stroke="#cf8a22" stroke-width=".7"/><path d="M4 -.35 H11.4" stroke="#fff6c0" stroke-width=".6"/></g></svg><svg class="ico" style="left:1120px;top:5px" width="24" height="24" viewBox="0 0 24 24"><defs><linearGradient id="tg" x1="0" x2="1"><stop offset="0" stop-color="#cfcfcf"/><stop offset=".35" stop-color="#f2f2f2"/><stop offset="1" stop-color="#bdbdbd"/></linearGradient></defs><path d="M2.6 5.6L3 16.3Q7 18.4 11 16.3L11.5 5.6Z" fill="url(#tg)" stroke="#6a6a6a" stroke-width="1"/><ellipse cx="7.05" cy="5.6" rx="4.45" ry="1.7" fill="#f4f4f4" stroke="#6a6a6a" stroke-width=".9"/><ellipse cx="7.05" cy="5.4" rx="1.5" ry=".7" fill="#9a9a9a"/><path d="M5.5 8.8v6.6M8.6 8.8v6.6" stroke="#a8a8a8" stroke-width=".9"/></svg></div><div class="a" style="left:19px;top:617px;width:1149px;height:31px;background:#fff;border-top:1px solid #d8d8d8;overflow:hidden"><div class="a" style="left:7px;top:8px;width:12px;height:12px;border:1px solid #9f9f9f;border-radius:3px;background:linear-gradient(#e8e8e8,#d4d4d4)"></div><div class="a" style="left:36px;top:8.84px;width:30px;text-align:center;font-size:12px;line-height:12px;color:#222">11</div><div class="a" style="left:80px;top:7px;height:16px;padding:0 5px;border-radius:3px;background:#4169e1;color:#fff;font-size:11.05px;line-height:16px">EN ESPERA DE PAGO POR PAYPAL</div><svg class="ico" style="left:652px;top:4px" width="24" height="24" viewBox="0 0 24 24"><path d="M8.1 6.3h6.6c3.2 0 4.6 1.7 4.2 4.3-.5 2.9-2.6 4.6-5.4 4.6h-2.4l-.8 4.3H4.9z" fill="#fff" stroke="#0b2a60" stroke-width="1.7" stroke-linejoin="round"/><ellipse cx="12.8" cy="10.8" rx="1.5" ry="1.2" fill="#0b2a60"/></svg><svg class="ico" style="left:770px;top:2px" width="24" height="24" viewBox="0 0 24 24"><path d="M7.6 8.3L16.8 17.5M16.8 8.3L7.6 17.5" stroke="#ee3a42" stroke-width="3.6"/><path d="M7.6 8.3L16.8 17.5M16.8 8.3L7.6 17.5" stroke="#fb7a7e" stroke-width="1.4"/></svg><svg class="ico" style="left:895px;top:2px" width="24" height="24" viewBox="0 0 24 24"><path d="M7.6 8.3L16.8 17.5M16.8 8.3L7.6 17.5" stroke="#ee3a42" stroke-width="3.6"/><path d="M7.6 8.3L16.8 17.5M16.8 8.3L7.6 17.5" stroke="#fb7a7e" stroke-width="1.4"/></svg><svg class="ico" style="left:1095px;top:4px" width="24" height="24" viewBox="0 0 24 24"><path d="M3.7 3.7h10.4l2.2 2.2v12.7H3.7z" fill="#fff" stroke="#c9c9c9" stroke-width="1"/><rect x="5.3" y="5.6" width="5.5" height="1.4" fill="#e6e8ee"/><g transform="translate(6.2 16.2) rotate(-45)"><path d="M0 0 L3 -1.45 H13.8 V1.45 H3 Z" fill="#f6d23c" stroke="#cf8a22" stroke-width=".8"/><path d="M0 0 L3 -1.45 V1.45 Z" fill="#f3c9a0"/><path d="M0 0 L1.2 -.55 V.55Z" fill="#4a2a08"/><rect x="11.600000000000001" y="-1.45" width="2.2" height="2.9" fill="#f0b080" stroke="#cf8a22" stroke-width=".7"/><path d="M4 -.35 H11.4" stroke="#fff6c0" stroke-width=".6"/></g></svg><svg class="ico" style="left:1120px;top:5px" width="24" height="24" viewBox="0 0 24 24"><defs><linearGradient id="tg" x1="0" x2="1"><stop offset="0" stop-color="#cfcfcf"/><stop offset=".35" stop-color="#f2f2f2"/><stop offset="1" stop-color="#bdbdbd"/></linearGradient></defs><path d="M2.6 5.6L3 16.3Q7 18.4 11 16.3L11.5 5.6Z" fill="url(#tg)" stroke="#6a6a6a" stroke-width="1"/><ellipse cx="7.05" cy="5.6" rx="4.45" ry="1.7" fill="#f4f4f4" stroke="#6a6a6a" stroke-width=".9"/><ellipse cx="7.05" cy="5.4" rx="1.5" ry=".7" fill="#9a9a9a"/><path d="M5.5 8.8v6.6M8.6 8.8v6.6" stroke="#a8a8a8" stroke-width=".9"/></svg></div><div class="a" style="left:19px;top:648px;width:1149px;height:31px;background:#f8f8f8;border-top:1px solid #d8d8d8;overflow:hidden"><div class="a" style="left:7px;top:8px;width:12px;height:12px;border:1px solid #9f9f9f;border-radius:3px;background:linear-gradient(#e8e8e8,#d4d4d4)"></div><div class="a" style="left:36px;top:8.84px;width:30px;text-align:center;font-size:12px;line-height:12px;color:#222">12</div><div class="a" style="left:80px;top:7px;height:16px;padding:0 5px;border-radius:3px;background:#32cd32;color:#fff;font-size:11.05px;line-height:16px">PAYMENT REMOTELY ACCEPTED</div><svg class="ico" style="left:652px;top:4px" width="24" height="24" viewBox="0 0 24 24"><g transform="rotate(-45 12 12.8)"><rect x=".7" y="11.6" width="3.3" height="2.4" fill="#4a78d0"/><path d="M4 9.6L10.6 8.9V16.7L4 16z" fill="#8db2ea" stroke="#3f6ec8" stroke-width=".9"/><rect x="10.6" y="10.1" width="2.2" height="1.5" fill="#a8a8a8"/><rect x="10.6" y="14" width="2.2" height="1.5" fill="#777"/><path d="M13.8 8.9L20 9.6V16L13.8 16.7z" fill="#8db2ea" stroke="#3f6ec8" stroke-width=".9"/><rect x="20" y="11.6" width="3.3" height="2.4" fill="#3a68c8"/></g></svg><svg class="ico" style="left:770px;top:2px" width="24" height="24" viewBox="0 0 24 24"><path d="M7.6 8.3L16.8 17.5M16.8 8.3L7.6 17.5" stroke="#ee3a42" stroke-width="3.6"/><path d="M7.6 8.3L16.8 17.5M16.8 8.3L7.6 17.5" stroke="#fb7a7e" stroke-width="1.4"/></svg><svg class="ico" style="left:895px;top:2px" width="24" height="24" viewBox="0 0 24 24"><path d="M5.8 12.7L9.9 16.8L18.3 8.5" fill="none" stroke="#3a9a3e" stroke-width="3.7"/><path d="M5.8 12.7L9.9 16.8L18.3 8.5" fill="none" stroke="#86d47c" stroke-width="1.5"/></svg><svg class="ico" style="left:1095px;top:4px" width="24" height="24" viewBox="0 0 24 24"><path d="M3.7 3.7h10.4l2.2 2.2v12.7H3.7z" fill="#fff" stroke="#c9c9c9" stroke-width="1"/><rect x="5.3" y="5.6" width="5.5" height="1.4" fill="#e6e8ee"/><g transform="translate(6.2 16.2) rotate(-45)"><path d="M0 0 L3 -1.45 H13.8 V1.45 H3 Z" fill="#f6d23c" stroke="#cf8a22" stroke-width=".8"/><path d="M0 0 L3 -1.45 V1.45 Z" fill="#f3c9a0"/><path d="M0 0 L1.2 -.55 V.55Z" fill="#4a2a08"/><rect x="11.600000000000001" y="-1.45" width="2.2" height="2.9" fill="#f0b080" stroke="#cf8a22" stroke-width=".7"/><path d="M4 -.35 H11.4" stroke="#fff6c0" stroke-width=".6"/></g></svg><svg class="ico" style="left:1120px;top:5px" width="24" height="24" viewBox="0 0 24 24"><defs><linearGradient id="tg" x1="0" x2="1"><stop offset="0" stop-color="#cfcfcf"/><stop offset=".35" stop-color="#f2f2f2"/><stop offset="1" stop-color="#bdbdbd"/></linearGradient></defs><path d="M2.6 5.6L3 16.3Q7 18.4 11 16.3L11.5 5.6Z" fill="url(#tg)" stroke="#6a6a6a" stroke-width="1"/><ellipse cx="7.05" cy="5.6" rx="4.45" ry="1.7" fill="#f4f4f4" stroke="#6a6a6a" stroke-width=".9"/><ellipse cx="7.05" cy="5.4" rx="1.5" ry=".7" fill="#9a9a9a"/><path d="M5.5 8.8v6.6M8.6 8.8v6.6" stroke="#a8a8a8" stroke-width=".9"/></svg></div><div class="a" style="left:18px;top:691px;width:131px;height:22px;border:1px solid #c4c4c4;border-radius:3px;background:linear-gradient(#fafafa,#e4e4e4);box-shadow:0 1px 0 rgba(0,0,0,.08)"></div><div class="a" style="left:27px;top:695.84px;font-size:12px;line-height:12px;color:#111;">Borrar seleccionados</div><div class="a" style="left:15px;top:722px;width:1157px;height:84px;background:#f8f8f8;border:1px solid #cbcbcb;border-radius:3px"></div><svg class="ico" style="left:1111px;top:737px" width="32" height="32" viewBox="0 0 32 32">
<defs><linearGradient id="pg722" x1="0" y1="0" x2="0" y2="1"><stop offset="0" stop-color="#8cc63c"/><stop offset="1" stop-color="#a2d40e"/></linearGradient></defs>
<circle cx="16" cy="16" r="14.5" fill="url(#pg722)" stroke="#5d9c14" stroke-width="1.4"/>
<circle cx="16" cy="16" r="12.6" fill="none" stroke="#c6e88a" stroke-width=".8" opacity=".7"/>
<path d="M13.8 8.5h4.4v5.3h5.3v4.4h-5.3v5.3h-4.4v-5.3H8.5v-4.4h5.3z" fill="#fff"/></svg><div class="a" style="left:1094.3px;top:770.99px;font-size:11px;line-height:11px;color:#111;">Añadir nuevo</div><div class="a" style="left:26px;top:746.68px;font-size:24px;line-height:24px;color:#000;">Estado de retorno</div><div class="a" style="left:18px;top:822.34px;font-size:12px;line-height:12px;color:#222">Página <b>1</b> / 1 | Mostrar</div><div class="a" style="left:136px;top:819px;width:46px;height:18px;background:#dedede;border:1px solid #c6c6c6"></div><div class="a" style="left:141px;top:822.34px;font-size:12px;line-height:12px;color:#222;">50</div><div class="a" style="left:167px;top:824.0px;font-size:9px;line-height:9px;color:#111">▼</div><div class="a" style="left:185px;top:822.34px;font-size:12px;line-height:12px;color:#222;">/ 5 resultado(s)</div><div class="a" style="left:1052px;top:819px;width:65px;height:22px;border:1px solid #c4c4c4;border-radius:3px;background:linear-gradient(#fafafa,#e4e4e4);box-shadow:0 1px 0 rgba(0,0,0,.08)"></div><div class="a" style="left:1061.5px;top:824.14px;font-size:12px;line-height:12px;color:#111;">Reiniciar</div><div class="a" style="left:1120px;top:819px;width:49px;height:22px;border:1px solid #c4c4c4;border-radius:3px;background:linear-gradient(#fafafa,#e4e4e4);box-shadow:0 1px 0 rgba(0,0,0,.08)"></div><div class="a" style="left:1129px;top:824.14px;font-size:12px;line-height:12px;color:#111;">Filtrar</div><div class="a" style="left:18px;top:845px;width:1151px;height:202px;border:1px solid #cfcfcf;border-bottom:2px solid #c4c4c4;border-radius:3px;background:#fff;box-shadow:0 1px 1px rgba(0,0,0,.1)"></div><div class="a" style="left:19px;top:846px;width:1149px;height:40px;background:linear-gradient(#f9f9f9,#e8e8e8)"></div><div class="a" style="left:19px;top:886px;width:1149px;height:34px;background:#eff6fd"></div><div class="a" style="left:25px;top:859px;width:12px;height:12px;border:1px solid #9f9f9f;border-radius:3px;background:linear-gradient(#e8e8e8,#d4d4d4)"></div><div class="a" style="left:60.5px;top:851.90px;font-size:13px;line-height:13px;color:#333;font-weight:bold;">ID</div><svg class="ico" style="left:57.5px;top:872px" width="24" height="6" viewBox="0 0 24 6"><path d="M0 0.5h9.5L4.75 5.5z" fill="#000"/><path d="M12.5 5.5h9.5L17.25 0.5z" fill="#c8c8c8"/></svg><div class="a" style="left:98.5px;top:851.90px;font-size:13px;line-height:13px;color:#333;font-weight:bold;">Nombre</div><svg class="ico" style="left:98.8px;top:872px" width="24" height="6" viewBox="0 0 24 6"><path d="M0 0.5h9.5L4.75 5.5z" fill="#000"/><path d="M12.5 5.5h9.5L17.25 0.5z" fill="#000"/></svg><div class="a" style="left:1104px;top:851.90px;font-size:13px;line-height:13px;color:#333;font-weight:bold;">Acciones</div><div class="a" style="left:28.5px;top:896.84px;font-size:12px;line-height:12px;color:#222;">--</div><div class="a" style="left:52px;top:893px;width:35px;height:20px;background:#fff;border:1px solid #c9c9c9"></div><div class="a" style="left:101px;top:893px;width:955px;height:20px;background:#fff;border:1px solid #c9c9c9"></div><div class="a" style="left:1130px;top:896.84px;font-size:12px;line-height:12px;color:#222;">--</div><div class="a" style="left:19px;top:920px;width:1149px;height:25px;background:#fff;border-top:1px solid #d8d8d8"></div><div class="a" style="left:26px;top:926px;width:12px;height:12px;border:1px solid #9f9f9f;border-radius:3px;background:linear-gradient(#e8e8e8,#d4d4d4)"></div><div class="a" style="left:55px;top:926.84px;width:30px;text-align:center;font-size:12px;line-height:12px;color:#222">1</div><div class="a" style="left:99px;top:925px;height:16px;padding:0 5px;border-radius:3px;background:#4169e1;color:#fff;font-size:11.05px;line-height:16px">PENDIENTE DE CONFIRMACIÓN</div><svg class="ico" style="left:1114px;top:921px" width="24" height="24" viewBox="0 0 24 24"><path d="M3.7 3.7h10.4l2.2 2.2v12.7H3.7z" fill="#fff" stroke="#c9c9c9" stroke-width="1"/><rect x="5.3" y="5.6" width="5.5" height="1.4" fill="#e6e8ee"/><g transform="translate(6.2 16.2) rotate(-45)"><path d="M0 0 L3 -1.45 H13.8 V1.45 H3 Z" fill="#f6d23c" stroke="#cf8a22" stroke-width=".8"/><path d="M0 0 L3 -1.45 V1.45 Z" fill="#f3c9a0"/><path d="M0 0 L1.2 -.55 V.55Z" fill="#4a2a08"/><rect x="11.600000000000001" y="-1.45" width="2.2" height="2.9" fill="#f0b080" stroke="#cf8a22" stroke-width=".7"/><path d="M4 -.35 H11.4" stroke="#fff6c0" stroke-width=".6"/></g></svg><svg class="ico" style="left:1139px;top:922px" width="24" height="24" viewBox="0 0 24 24"><defs><linearGradient id="tg" x1="0" x2="1"><stop offset="0" stop-color="#cfcfcf"/><stop offset=".35" stop-color="#f2f2f2"/><stop offset="1" stop-color="#bdbdbd"/></linearGradient></defs><path d="M2.6 5.6L3 16.3Q7 18.4 11 16.3L11.5 5.6Z" fill="url(#tg)" stroke="#6a6a6a" stroke-width="1"/><ellipse cx="7.05" cy="5.6" rx="4.45" ry="1.7" fill="#f4f4f4" stroke="#6a6a6a" stroke-width=".9"/><ellipse cx="7.05" cy="5.4" rx="1.5" ry=".7" fill="#9a9a9a"/><path d="M5.5 8.8v6.6M8.6 8.8v6.6" stroke="#a8a8a8" stroke-width=".9"/></svg><div class="a" style="left:19px;top:945px;width:1149px;height:25px;background:#f8f8f8;border-top:1px solid #d8d8d8"></div><div class="a" style="left:26px;top:951px;width:12px;height:12px;border:1px solid #9f9f9f;border-radius:3px;background:linear-gradient(#e8e8e8,#d4d4d4)"></div><div class="a" style="left:55px;top:951.84px;width:30px;text-align:center;font-size:12px;line-height:12px;color:#222">2</div><div class="a" style="left:99px;top:950px;height:16px;padding:0 5px;border-radius:3px;background:#8a2be2;color:#fff;font-size:11.05px;line-height:16px">EN ESPERA DE PAQUETES</div><svg class="ico" style="left:1114px;top:946px" width="24" height="24" viewBox="0 0 24 24"><path d="M3.7 3.7h10.4l2.2 2.2v12.7H3.7z" fill="#fff" stroke="#c9c9c9" stroke-width="1"/><rect x="5.3" y="5.6" width="5.5" height="1.4" fill="#e6e8ee"/><g transform="translate(6.2 16.2) rotate(-45)"><path d="M0 0 L3 -1.45 H13.8 V1.45 H3 Z" fill="#f6d23c" stroke="#cf8a22" stroke-width=".8"/><path d="M0 0 L3 -1.45 V1.45 Z" fill="#f3c9a0"/><path d="M0 0 L1.2 -.55 V.55Z" fill="#4a2a08"/><rect x="11.600000000000001" y="-1.45" width="2.2" height="2.9" fill="#f0b080" stroke="#cf8a22" stroke-width=".7"/><path d="M4 -.35 H11.4" stroke="#fff6c0" stroke-width=".6"/></g></svg><svg class="ico" style="left:1139px;top:947px" width="24" height="24" viewBox="0 0 24 24"><defs><linearGradient id="tg" x1="0" x2="1"><stop offset="0" stop-color="#cfcfcf"/><stop offset=".35" stop-color="#f2f2f2"/><stop offset="1" stop-color="#bdbdbd"/></linearGradient></defs><path d="M2.6 5.6L3 16.3Q7 18.4 11 16.3L11.5 5.6Z" fill="url(#tg)" stroke="#6a6a6a" stroke-width="1"/><ellipse cx="7.05" cy="5.6" rx="4.45" ry="1.7" fill="#f4f4f4" stroke="#6a6a6a" stroke-width=".9"/><ellipse cx="7.05" cy="5.4" rx="1.5" ry=".7" fill="#9a9a9a"/><path d="M5.5 8.8v6.6M8.6 8.8v6.6" stroke="#a8a8a8" stroke-width=".9"/></svg><div class="a" style="left:19px;top:970px;width:1149px;height:25px;background:#fff;border-top:1px solid #d8d8d8"></div><div class="a" style="left:26px;top:976px;width:12px;height:12px;border:1px solid #9f9f9f;border-radius:3px;background:linear-gradient(#e8e8e8,#d4d4d4)"></div><div class="a" style="left:55px;top:976.84px;width:30px;text-align:center;font-size:12px;line-height:12px;color:#222">3</div><div class="a" style="left:99px;top:975px;height:16px;padding:0 5px;border-radius:3px;background:#32cd32;color:#fff;font-size:11.05px;line-height:16px">PAQUETES RECIBIDOS</div><svg class="ico" style="left:1114px;top:971px" width="24" height="24" viewBox="0 0 24 24"><path d="M3.7 3.7h10.4l2.2 2.2v12.7H3.7z" fill="#fff" stroke="#c9c9c9" stroke-width="1"/><rect x="5.3" y="5.6" width="5.5" height="1.4" fill="#e6e8ee"/><g transform="translate(6.2 16.2) rotate(-45)"><path d="M0 0 L3 -1.45 H13.8 V1.45 H3 Z" fill="#f6d23c" stroke="#cf8a22" stroke-width=".8"/><path d="M0 0 L3 -1.45 V1.45 Z" fill="#f3c9a0"/><path d="M0 0 L1.2 -.55 V.55Z" fill="#4a2a08"/><rect x="11.600000000000001" y="-1.45" width="2.2" height="2.9" fill="#f0b080" stroke="#cf8a22" stroke-width=".7"/><path d="M4 -.35 H11.4" stroke="#fff6c0" stroke-width=".6"/></g></svg><svg class="ico" style="left:1139px;top:972px" width="24" height="24" viewBox="0 0 24 24"><defs><linearGradient id="tg" x1="0" x2="1"><stop offset="0" stop-color="#cfcfcf"/><stop offset=".35" stop-color="#f2f2f2"/><stop offset="1" stop-color="#bdbdbd"/></linearGradient></defs><path d="M2.6 5.6L3 16.3Q7 18.4 11 16.3L11.5 5.6Z" fill="url(#tg)" stroke="#6a6a6a" stroke-width="1"/><ellipse cx="7.05" cy="5.6" rx="4.45" ry="1.7" fill="#f4f4f4" stroke="#6a6a6a" stroke-width=".9"/><ellipse cx="7.05" cy="5.4" rx="1.5" ry=".7" fill="#9a9a9a"/><path d="M5.5 8.8v6.6M8.6 8.8v6.6" stroke="#a8a8a8" stroke-width=".9"/></svg><div class="a" style="left:19px;top:995px;width:1149px;height:25px;background:#f8f8f8;border-top:1px solid #d8d8d8"></div><div class="a" style="left:26px;top:1001px;width:12px;height:12px;border:1px solid #9f9f9f;border-radius:3px;background:linear-gradient(#e8e8e8,#d4d4d4)"></div><div class="a" style="left:55px;top:1001.84px;width:30px;text-align:center;font-size:12px;line-height:12px;color:#222">4</div><div class="a" style="left:99px;top:1000px;height:16px;padding:0 5px;border-radius:3px;background:#dc143c;color:#fff;font-size:11.05px;line-height:16px">VOLVER NEGÓ</div><svg class="ico" style="left:1114px;top:996px" width="24" height="24" viewBox="0 0 24 24"><path d="M3.7 3.7h10.4l2.2 2.2v12.7H3.7z" fill="#fff" stroke="#c9c9c9" stroke-width="1"/><rect x="5.3" y="5.6" width="5.5" height="1.4" fill="#e6e8ee"/><g transform="translate(6.2 16.2) rotate(-45)"><path d="M0 0 L3 -1.45 H13.8 V1.45 H3 Z" fill="#f6d23c" stroke="#cf8a22" stroke-width=".8"/><path d="M0 0 L3 -1.45 V1.45 Z" fill="#f3c9a0"/><path d="M0 0 L1.2 -.55 V.55Z" fill="#4a2a08"/><rect x="11.600000000000001" y="-1.45" width="2.2" height="2.9" fill="#f0b080" stroke="#cf8a22" stroke-width=".7"/><path d="M4 -.35 H11.4" stroke="#fff6c0" stroke-width=".6"/></g></svg><svg class="ico" style="left:1139px;top:997px" width="24" height="24" viewBox="0 0 24 24"><defs><linearGradient id="tg" x1="0" x2="1"><stop offset="0" stop-color="#cfcfcf"/><stop offset=".35" stop-color="#f2f2f2"/><stop offset="1" stop-color="#bdbdbd"/></linearGradient></defs><path d="M2.6 5.6L3 16.3Q7 18.4 11 16.3L11.5 5.6Z" fill="url(#tg)" stroke="#6a6a6a" stroke-width="1"/><ellipse cx="7.05" cy="5.6" rx="4.45" ry="1.7" fill="#f4f4f4" stroke="#6a6a6a" stroke-width=".9"/><ellipse cx="7.05" cy="5.4" rx="1.5" ry=".7" fill="#9a9a9a"/><path d="M5.5 8.8v6.6M8.6 8.8v6.6" stroke="#a8a8a8" stroke-width=".9"/></svg><div class="a" style="left:19px;top:1020px;width:1149px;height:25px;background:#fff;border-top:1px solid #d8d8d8"></div><div class="a" style="left:26px;top:1026px;width:12px;height:12px;border:1px solid #9f9f9f;border-radius:3px;background:linear-gradient(#e8e8e8,#d4d4d4)"></div><div class="a" style="left:55px;top:1026.84px;width:30px;text-align:center;font-size:12px;line-height:12px;color:#222">5</div><div class="a" style="left:99px;top:1025px;height:16px;padding:0 5px;border-radius:3px;background:#108510;color:#fff;font-size:11.05px;line-height:16px">DILIGENCIADOS</div><svg class="ico" style="left:1114px;top:1021px" width="24" height="24" viewBox="0 0 24 24"><path d="M3.7 3.7h10.4l2.2 2.2v12.7H3.7z" fill="#fff" stroke="#c9c9c9" stroke-width="1"/><rect x="5.3" y="5.6" width="5.5" height="1.4" fill="#e6e8ee"/><g transform="translate(6.2 16.2) rotate(-45)"><path d="M0 0 L3 -1.45 H13.8 V1.45 H3 Z" fill="#f6d23c" stroke="#cf8a22" stroke-width=".8"/><path d="M0 0 L3 -1.45 V1.45 Z" fill="#f3c9a0"/><path d="M0 0 L1.2 -.55 V.55Z" fill="#4a2a08"/><rect x="11.600000000000001" y="-1.45" width="2.2" height="2.9" fill="#f0b080" stroke="#cf8a22" stroke-width=".7"/><path d="M4 -.35 H11.4" stroke="#fff6c0" stroke-width=".6"/></g></svg><svg class="ico" style="left:1139px;top:1022px" width="24" height="24" viewBox="0 0 24 24"><defs><linearGradient id="tg" x1="0" x2="1"><stop offset="0" stop-color="#cfcfcf"/><stop offset=".35" stop-color="#f2f2f2"/><stop offset="1" stop-color="#bdbdbd"/></linearGradient></defs><path d="M2.6 5.6L3 16.3Q7 18.4 11 16.3L11.5 5.6Z" fill="url(#tg)" stroke="#6a6a6a" stroke-width="1"/><ellipse cx="7.05" cy="5.6" rx="4.45" ry="1.7" fill="#f4f4f4" stroke="#6a6a6a" stroke-width=".9"/><ellipse cx="7.05" cy="5.4" rx="1.5" ry=".7" fill="#9a9a9a"/><path d="M5.5 8.8v6.6M8.6 8.8v6.6" stroke="#a8a8a8" stroke-width=".9"/></svg><div class="a" style="left:18px;top:1057px;width:131px;height:22px;border:1px solid #c4c4c4;border-radius:3px;background:linear-gradient(#fafafa,#e4e4e4);box-shadow:0 1px 0 rgba(0,0,0,.08)"></div><div class="a" style="left:27px;top:1061.84px;font-size:12px;line-height:12px;color:#111;">Borrar seleccionados</div><div class="a" style="left:9.8px;top:1099.90px;font-size:10.75px;line-height:10.75px;color:#111;">PrestaShop™ 1.5.2.0</div><div class="a" style="left:9.8px;top:1112.30px;font-size:10.75px;line-height:10.75px;color:#6c6c6c;">Tiempo de carga:0.408s</div><div class="a" style="left:1019.8px;top:1099.85px;font-size:10.8px;line-height:10.8px;color:#333">| <b style="color:#268ccd;text-decoration:underline">Contacto</b> | <b style="color:#268ccd;text-decoration:underline">Bug Tracker</b> | <b style="color:#268ccd;text-decoration:underline">Foro</b></div><svg class="ico" style="left:1117px;top:725px" width="40" height="40" viewBox="0 0 40 40"><defs><mask id="m725"><rect width="40" height="40" fill="#fff"/><path d="M19.8 10.5V29.5M9 21L19.8 10.2L30.6 21" fill="none" stroke="#000" stroke-width="5.6" stroke-linecap="round" stroke-linejoin="round"/></mask></defs><rect width="40" height="40" rx="8" fill="rgba(28,34,44,.18)" mask="url(#m725)"/><g opacity=".25"><path d="M19.8 10.5V29.5M9 21L19.8 10.2L30.6 21" fill="none" stroke="#fff" stroke-width="5.6" stroke-linecap="round" stroke-linejoin="round"/></g></svg><svg class="ico" style="left:1117px;top:1093px" width="40" height="40" viewBox="0 0 40 40"><defs><mask id="m1093"><rect width="40" height="40" fill="#fff"/><path d="M19.8 10.5V29.5M9 21L19.8 10.2L30.6 21" fill="none" stroke="#000" stroke-width="5.6" stroke-linecap="round" stroke-linejoin="round"/></mask></defs><rect width="40" height="40" rx="8" fill="rgba(28,34,44,.18)" mask="url(#m1093)"/><g opacity=".25"><path d="M19.8 10.5V29.5M9 21L19.8 10.2L30.6 21" fill="none" stroke="#fff" stroke-width="5.6" stroke-linecap="round" stroke-linejoin="round"/></g></svg><div class="a" style="left:15px;top:794px;width:1px;height:1px;background:#f0f0f0"></div></body></html>
